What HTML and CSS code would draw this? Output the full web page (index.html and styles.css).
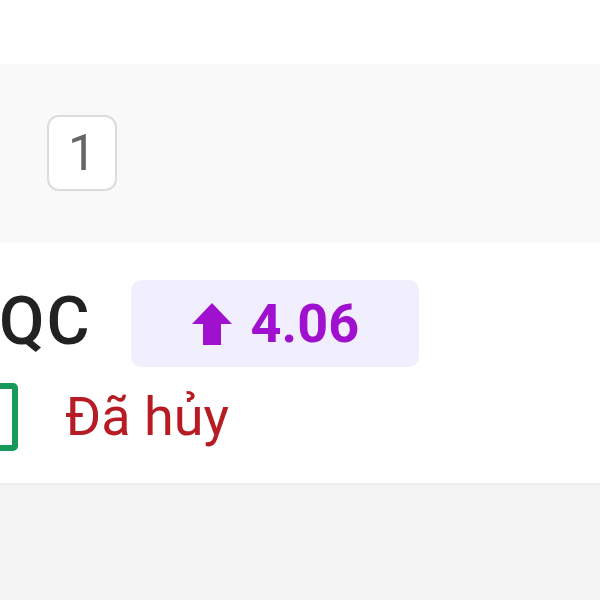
FILE: index.html
```html
<!DOCTYPE html>
<html lang="vi">
  <head>
    <meta charset="utf-8">
    <title>Đơn hàng</title>
    <link rel="stylesheet" href="styles.css">
  </head>
  <body>
    <section class="top-space"></section>

    <section class="pager">
      <span class="page-box">1</span>
    </section>

    <section class="order">
      <div class="order-head">
        <span class="order-code">QC</span>
        <span class="rate-badge">
          <svg class="arrow" viewBox="0 0 40 42" width="40" height="42">
            <path d="M20 0 L40 21 L29 21 L29 42 L11 42 L11 21 L0 21 Z" fill="currentColor"/>
          </svg>
          <span>4.06</span>
        </span>
      </div>
      <div class="order-status">
        <span class="check"></span>
        <span class="status-text">Đã hủy</span>
      </div>
    </section>

    <section class="footer-band"></section>
  </body>
</html>
```

FILE: styles.css
```css
* {
  margin: 0;
  padding: 0;
  box-sizing: border-box;
}

body {
  font-family: Roboto, "Noto Sans", sans-serif;
  background: #fff;
  width: 600px;
  height: 600px;
  overflow: hidden;
}

.top-space {
  height: 64px;
}

.pager {
  height: 179px;
  background: #f9f9f9;
  padding: 51px 0 0 47px;
}

.page-box {
  display: flex;
  align-items: center;
  justify-content: center;
  width: 70px;
  height: 76px;
  background: #fff;
  border: 2px solid #dcdcdc;
  border-radius: 12px;
  color: #666;
  font-size: 50px;
  line-height: 1;
}

.order {
  height: 240px;
  padding-top: 37px;
}

.order-head {
  display: flex;
  align-items: center;
  gap: 39px;
}

.order-code {
  font-size: 66px;
  font-weight: 500;
  color: #222;
  line-height: 1;
  letter-spacing: 2px;
  margin-left: -1px;
  margin-top: -3px;
}

.rate-badge {
  display: flex;
  align-items: center;
  gap: 19px;
  width: 288px;
  height: 87px;
  background: #f1effd;
  border-radius: 10px;
  color: #a010cf;
  font-size: 54px;
  font-weight: 700;
  padding-left: 61px;
}

.arrow {
  display: block;
}

.order-status {
  display: flex;
  align-items: center;
  gap: 47px;
  margin-top: 16px;
}

.check {
  width: 40px;
  height: 68px;
  margin-left: -22px;
  border: 6px solid #16995a;
  border-radius: 5px;
}

.status-text {
  font-size: 54px;
  color: #b71c25;
  line-height: 1;
}

.footer-band {
  height: 118px;
  background: #f4f4f4;
  border-top: 2px solid #efefef;
}
```
